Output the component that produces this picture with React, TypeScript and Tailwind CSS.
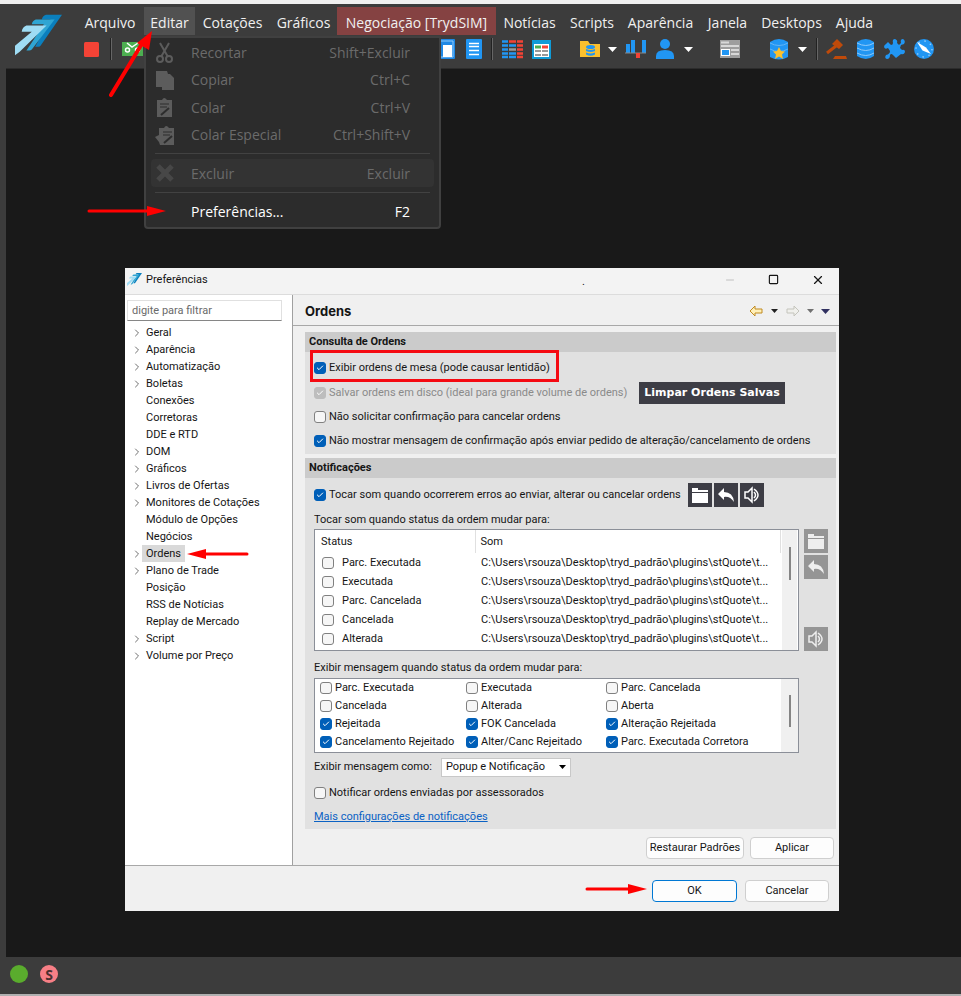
import React, { useState } from 'react';
import { ChevronRight, Check, Minus, Square, X } from 'lucide-react';

interface MenuEntry {
  label: string;
  width: string;
  active?: boolean;
  highlight?: boolean;
}

const menuEntries: MenuEntry[] = [
  { label: 'Arquivo', width: 'w-[66px]' },
  { label: 'Editar', width: 'w-[51px]', active: true },
  { label: 'Cotações', width: 'w-[75px]' },
  { label: 'Gráficos', width: 'w-[67px]' },
  { label: 'Negociação [TrydSIM]', width: 'w-[159px]', highlight: true },
  { label: 'Notícias', width: 'w-[67px]' },
  { label: 'Scripts', width: 'w-[58px]' },
  { label: 'Aparência', width: 'w-[79px]' },
  { label: 'Janela', width: 'w-[55px]' },
  { label: 'Desktops', width: 'w-[73px]' },
  { label: 'Ajuda', width: 'w-[53px]' },
];

const treeItems = [
  { label: 'Geral', children: true },
  { label: 'Aparência', children: true },
  { label: 'Automatização', children: true },
  { label: 'Boletas', children: true },
  { label: 'Conexões' },
  { label: 'Corretoras' },
  { label: 'DDE e RTD' },
  { label: 'DOM', children: true },
  { label: 'Gráficos', children: true },
  { label: 'Livros de Ofertas', children: true },
  { label: 'Monitores de Cotações', children: true },
  { label: 'Módulo de Opções' },
  { label: 'Negócios' },
  { label: 'Ordens', children: true },
  { label: 'Plano de Trade', children: true },
  { label: 'Posição' },
  { label: 'RSS de Notícias' },
  { label: 'Replay de Mercado' },
  { label: 'Script', children: true },
  { label: 'Volume por Preço', children: true },
];

const soundRows = ['Parc. Executada', 'Executada', 'Parc. Cancelada', 'Cancelada', 'Alterada'];
const soundPath = 'C:\\Users\\rsouza\\Desktop\\tryd_padrão\\plugins\\stQuote\\t...';

const messageOptions = [
  { label: 'Parc. Executada', checked: false },
  { label: 'Executada', checked: false },
  { label: 'Parc. Cancelada', checked: false },
  { label: 'Cancelada', checked: false },
  { label: 'Alterada', checked: false },
  { label: 'Aberta', checked: false },
  { label: 'Rejeitada', checked: true },
  { label: 'FOK Cancelada', checked: true },
  { label: 'Alteração Rejeitada', checked: true },
  { label: 'Cancelamento Rejeitado', checked: true },
  { label: 'Alter/Canc Rejeitado', checked: true },
  { label: 'Parc. Executada Corretora', checked: true },
];

const Logo: React.FC<{ className: string }> = ({ className }) => (
  <svg viewBox="0 0 140 120" className={className} aria-hidden="true">
    <path d="M92 0H140L76 92Q74 95 70 95H60L106 14H80Q82 3 92 0Z" fill="#0b7fbd" />
    <path d="M62 14H118L50 103Q47 106 42 106H34L86 28H50Q52 17 62 14Z" fill="#2fa5d3" />
    <path d="M34 32H94L14 110L0 120V92L50 50H20Q22 36 34 32Z" fill="#9fdcf4" />
  </svg>
);

interface CheckboxProps {
  label: string;
  defaultChecked?: boolean;
  disabled?: boolean;
  className?: string;
  gap?: string;
}

const Checkbox: React.FC<CheckboxProps> = ({ label, defaultChecked, disabled, className = '', gap = 'gap-[3px]' }) => (
  <label className={`flex items-center whitespace-nowrap ${gap} ${disabled ? 'text-[#8a8a8a]' : ''} ${className}`}>
    <span className="relative flex shrink-0">
      <input
        type="checkbox"
        defaultChecked={defaultChecked}
        disabled={disabled}
        className="peer h-3 w-3 appearance-none rounded-[3px] border border-[#808080] bg-[#f6f6f6] checked:border-[#005fb8] checked:bg-[#005fb8] disabled:border-[#bdbdbd] disabled:bg-[#bdbdbd]"
      />
      <Check className="pointer-events-none absolute left-0.5 top-0.5 hidden h-2 w-2 text-white peer-checked:block" strokeWidth={3} />
    </span>
    {label}
  </label>
);

const Arrow: React.FC<{ length: number; className?: string }> = ({ length, className = '' }) => (
  <svg width={length} height="12" viewBox={`0 0 ${length} 12`} className={`pointer-events-none shrink-0 ${className}`} aria-hidden="true">
    <path d={`M2 6H${length - 16}`} stroke="#ff0000" strokeWidth="3" strokeLinecap="round" />
    <path d={`M${length - 19} 1L${length} 6L${length - 19} 11Z`} fill="#ff0000" />
  </svg>
);

const Caret: React.FC<{ size?: string; className?: string }> = ({ size = 'h-[5px] w-[9px]', className = 'text-white' }) => (
  <svg viewBox="0 0 10 6" preserveAspectRatio="none" className={`shrink-0 ${size} ${className}`} aria-hidden="true">
    <path d="M0 0H10L5 6Z" fill="currentColor" />
  </svg>
);

const ToolButton: React.FC<{ name: string; className?: string; children: React.ReactNode }> = ({ name, className = '', children }) => (
  <button aria-label={name} className={`flex h-[22px] w-[22px] shrink-0 items-center justify-center ${className}`}>
    <svg viewBox="0 0 22 22" className="h-[22px] w-[22px]" fill="none">
      {children}
    </svg>
  </button>
);

const Divider: React.FC<{ className?: string }> = ({ className = '' }) => (
  <span className={`h-[22px] w-[2px] shrink-0 border-l border-[#222222] bg-[#666666] ${className}`} />
);

const Toolbar = () => (
  <div className="flex h-7 items-center">
    <ToolButton name="Parar">
      <rect x="3" y="4" width="15" height="15" rx="1.5" fill="#f44336" />
    </ToolButton>
    <Divider className="ml-[7px]" />
    <ToolButton name="Boleta" className="ml-[10px]">
      <rect x="0" y="4" width="21" height="14" fill="#4caf50" />
      <circle cx="5.500" cy="12" r="2" stroke="#fff" strokeWidth="1.500" />
      <circle cx="15.500" cy="12" r="2" stroke="#fff" strokeWidth="1.500" />
      <path d="M5 5L10 9L16 5" stroke="#fff" strokeWidth="1.500" />
    </ToolButton>
    <ToolButton name="Painel" className="ml-[291px]">
      <rect x="0" y="1" width="20" height="20" rx="1" fill="#1e88e5" />
      <path d="M2 3H18V19H2Z" stroke="#90caf9" />
      <rect x="8" y="7" width="9" height="12" fill="#fff" />
    </ToolButton>
    <ToolButton name="Lista" className="ml-2">
      <rect x="1" y="1" width="16" height="20" rx="1" fill="#2196f3" />
      <path d="M4 5.500H14M4 8.500H14M4 12.500H14M4 16.500H14" stroke="#fff" strokeWidth="1.500" />
    </ToolButton>
    <Divider className="ml-1" />
    <ToolButton name="Grade" className="ml-[9px]">
      <path d="M0 3.500H6M0 7.500H6M0 11.500H6M0 15.500H6M0 19H6M7 7.500H14M7 15.500H14M7 19H14" stroke="#2196f3" strokeWidth="2.500" />
      <path d="M7 3.500H14M15 3.500H21M15 7.500H21M15 11.500H21M15 15.500H21M15 19H21" stroke="#f44336" strokeWidth="2.500" />
      <path d="M7 11.500H14" stroke="#999" strokeWidth="2.500" />
    </ToolButton>
    <ToolButton name="Tabela" className="ml-2">
      <rect x="0" y="2" width="19" height="19" fill="#0f9bd7" />
      <rect x="2" y="6" width="15" height="13" fill="#fff" />
      <path d="M3 9H9" stroke="#4caf50" strokeWidth="3" />
      <path d="M10 9H16" stroke="#f44336" strokeWidth="3" />
      <path d="M3 13H9M10 13H16M3 17H9M10 17H16" stroke="#999" strokeWidth="2" />
    </ToolButton>
    <ToolButton name="Pasta de dados" className="ml-[26px]">
      <path d="M0 3H8L10 6H20V19H0Z" fill="#fbc02d" />
      <ellipse cx="10.500" cy="9" rx="4.500" ry="2" fill="#2196f3" />
      <path d="M6 11Q10.500 13 15 11V13Q10.500 15 6 13ZM6 14.500Q10.500 16.500 15 14.500V16.500Q10.500 19 6 16.500Z" fill="#2196f3" />
    </ToolButton>
    <Caret className="ml-[6px] text-white" />
    <ToolButton name="Gráfico" className="ml-2">
      <path d="M1 6H5V15H1ZM6 2H10V15H6ZM17 2H21V15H17Z" fill="#2196f3" />
      <path d="M0 15H21" stroke="#888" strokeWidth="1" />
      <path d="M11 15H15V20H11Z" fill="#f44336" />
    </ToolButton>
    <ToolButton name="Usuário" className="ml-2">
      <circle cx="10" cy="6" r="5" fill="#2196f3" />
      <path d="M1 21V18Q1 12 10 12Q19 12 19 18V21Z" fill="#2196f3" />
    </ToolButton>
    <Caret className="ml-[7px] text-white" />
    <ToolButton name="Notícias" className="ml-[27px]">
      <rect x="0" y="2" width="20" height="18" fill="#9e9e9e" />
      <path d="M1 4.500H9M1 8H19M11 12H19M11 16H19" stroke="#d8d8d8" strokeWidth="2" />
      <rect x="1" y="11" width="9" height="7" fill="#fff" />
      <rect x="2" y="12" width="7" height="5" fill="#2196f3" />
    </ToolButton>
    <ToolButton name="Desktops" className="ml-[26px]">
      <path d="M2 4Q11 -2 20 4V19Q11 24 2 19Z" fill="#2196f3" />
      <path d="M2 5Q11 10 20 5M2 11Q11 16 20 11" stroke="#64b5f6" />
      <path d="M11 9L13 13L17 13.500L14 16.500L15 21L11 18.500L7 21L8 16.500L5 13.500L9 13Z" fill="#fbc02d" />
    </ToolButton>
    <Caret className="ml-[8px] text-white" />
    <Divider className="ml-[9px]" />
    <ToolButton name="Leilão" className="ml-2">
      <path d="M6 6L11 1L17 7L13 11Z" fill="#bf4a0a" />
      <path d="M10 8L1 15" stroke="#bf4a0a" strokeWidth="3" />
      <path d="M9 18H20L21 21H7Z" fill="#bf4a0a" />
    </ToolButton>
    <ToolButton name="Dados" className="ml-2">
      <path d="M1 4Q10 -2 18 4V18Q10 24 1 18Z" fill="#2196f3" />
      <path d="M1 5Q10 10 18 5M1 10Q10 15 18 10M1 15Q10 20 18 15" stroke="#90caf9" />
    </ToolButton>
    <ToolButton name="Plugins" className="ml-[6px]">
      <path
        d="M4 4L7 7Q9 7 9 5Q8 1 11 1Q14 2 13 5L15 7L17 5Q16 1 19 1Q22 3 20 6L17 7L16 10L18 12Q21 11 21 14Q20 17 17 16L12 20L9 17Q7 15 6 17Q6 21 3 21Q0 20 2 17Q6 16 6 13L4 10Q1 12 0 9Q0 7 2 6Z"
        fill="#2196f3"
      />
    </ToolButton>
    <ToolButton name="Navegar" className="ml-[7px]">
      <circle cx="11" cy="11" r="10" fill="#2196f3" />
      <circle cx="11" cy="11" r="8" stroke="#90caf9" strokeWidth="1.500" strokeDasharray="1.500 4.800" />
      <path d="M4 4L13 9.500L18 16L9.500 12.500Z" fill="#fff" />
    </ToolButton>
  </div>
);

const editIcons: Record<string, React.ReactNode> = {
  Recortar: (
    <path d="M5 1L13 15M14 1L6 15M8 17A3 3 0 1 1 2 17A3 3 0 1 1 8 17M17 17A3 3 0 1 1 11 17A3 3 0 1 1 17 17" stroke="currentColor" strokeWidth="2" />
  ),
  Copiar: <path d="M1 1H12L13 4H15L19 8V20H7V17H1Z" fill="currentColor" />,
  Colar: (
    <>
      <path d="M2 3H7Q9 -1 12 3H17V20H2Z" fill="currentColor" />
      <path d="M5 7H14M5 10H12" stroke="#2d2d2d" />
      <path d="M6 18L14 11" stroke="#2d2d2d" strokeWidth="2" />
    </>
  ),
  'Colar Especial': (
    <>
      <path d="M4 3H9Q11 -1 14 3H19V20H5L4 17L0 12L4 10Z" fill="currentColor" />
      <path d="M8 7H17M8 10H15" stroke="#2d2d2d" />
      <path d="M9 18L17 11" stroke="#2d2d2d" strokeWidth="2" />
    </>
  ),
  Excluir: <path d="M3 3L17 17M17 3L3 17" stroke="#474747" strokeWidth="5" />,
};

const EditRow: React.FC<{ label: string; shortcut: string; className?: string }> = ({ label, shortcut, className = 'h-7 text-[#6b6b6b]' }) => (
  <button role="menuitem" className={`flex w-full items-center pl-1 pr-6 text-left ${className}`}>
    <svg viewBox="0 0 20 20" className="mr-4 h-5 w-5 overflow-visible text-[#5c5c5c]" fill="none" aria-hidden="true">
      {editIcons[label]}
    </svg>
    <span className="flex-1">{label}</span>
    <span>{shortcut}</span>
  </button>
);

const EditMenu = () => (
  <div role="menu" className="absolute left-[144px] top-8 z-20 w-[297px] rounded-b-[4px] border-2 border-[#404040] bg-[#2c2c2c] px-[5px] pb-[2px] text-[14px]">
    <EditRow label="Recortar" shortcut="Shift+Excluir" />
    <EditRow label="Copiar" shortcut="Ctrl+C" className="h-[27px] text-[#6b6b6b]" />
    <EditRow label="Colar" shortcut="Ctrl+V" />
    <EditRow label="Colar Especial" shortcut="Ctrl+Shift+V" className="h-[27px] text-[#6b6b6b]" />
    <hr className="mx-1 my-[5px] border-[#424242]" />
    <EditRow label="Excluir" shortcut="Excluir" className="h-7 rounded-[4px] bg-[#333333] text-[#6b6b6b]" />
    <hr className="mx-1 my-[5px] border-[#424242]" />
    <EditRow label="Preferências..." shortcut="F2" className="h-[27px] text-white" />
    <Arrow length={79} className="absolute -left-[59px] bottom-[10px]" />
  </div>
);

const Header = () => (
  <header className="relative flex h-16 bg-[#3c3c3c] text-[14px] text-[#f0f0f0]">
    <div className="flex w-[77px] shrink-0 justify-center">
      <Logo className="mt-[10px] h-[42px] w-[47px]" />
    </div>
    <div className="pt-[3px]">
      <nav className="flex h-7">
        {menuEntries.map((entry) => (
          <button
            key={entry.label}
            className={`whitespace-nowrap pt-[2px] ${entry.width} ${entry.active ? 'ml-[1px] bg-[#515151]' : ''} ${entry.highlight ? 'bg-[#854242]' : ''}`}
          >
            {entry.label}
          </button>
        ))}
      </nav>
      <div className="pl-1">
        <Toolbar />
      </div>
    </div>
    <EditMenu />
    <svg viewBox="0 0 44 70" className="pointer-events-none absolute left-[109px] top-[23px] z-30 h-[70px] w-11" aria-hidden="true">
      <path d="M2 68L34 15" stroke="#ff0000" strokeWidth="4" strokeLinecap="round" />
      <path d="M43 4L40 23L28 16Z" fill="#ff0000" />
    </svg>
  </header>
);

const Sidebar: React.FC = () => {
  const [selected, setSelected] = useState('Ordens');

  return (
    <aside className="w-[168px] shrink-0 border-r border-[#a0a0a0] bg-white pl-[2px] pr-[10px] pt-[5px]">
      <input
        type="text"
        aria-label="Filtro"
        placeholder="digite para filtrar"
        className="h-[21px] w-full border border-[#e0e0e0] border-b-[#868686] px-1 placeholder:text-[#6a6a6a]"
      />
      <ul className="mt-[3px]">
        {treeItems.map((item) => (
          <li key={item.label} className="flex h-[17px] items-center">
            <span className="flex w-[15px] justify-center pl-1">
              {item.children && <ChevronRight className="h-3 w-3 shrink-0 text-[#707070]" />}
            </span>
            <button
              onClick={() => setSelected(item.label)}
              className={`h-[17px] whitespace-nowrap px-1 leading-[16px] ${selected === item.label ? 'bg-[#d9d9d9]' : ''}`}
            >
              {item.label}
            </button>
            {item.label === 'Ordens' && <Arrow length={62} className="ml-[2px] rotate-180" />}
          </li>
        ))}
      </ul>
    </aside>
  );
};

const SoundButton: React.FC<{ kind: 'folder' | 'undo' | 'speaker'; disabled?: boolean; className?: string }> = ({ kind, disabled, className = '' }) => (
  <button
    aria-label={kind === 'folder' ? 'Abrir' : kind === 'undo' ? 'Restaurar' : 'Ouvir'}
    disabled={disabled}
    className={`flex h-6 w-6 items-center justify-center ${disabled ? 'bg-[#959595] text-[#eeeeee]' : 'bg-[#3d3d45] text-white'} ${className}`}
  >
    <svg viewBox="0 0 18 18" className="h-[18px] w-[18px]" fill="currentColor" aria-hidden="true">
      {kind === 'folder' && <path d="M1 2H7V4H17V6H1ZM1 7H17V17H1Z" />}
      {kind === 'undo' && <path d="M1 8L7 2V6Q16 6 17 16Q13 10 7 11V14Z" />}
      {kind === 'speaker' && (
        <>
          <path d="M2 6H5L9 2V16L5 12H2Z" fill="none" stroke="currentColor" strokeWidth="1.500" />
          <path d="M11 6Q14 9 11 12M11 3Q19 9 11 15" fill="none" stroke="currentColor" strokeWidth="1.500" />
        </>
      )}
    </svg>
  </button>
);

const Section: React.FC<{ title: string; className?: string; children: React.ReactNode }> = ({ title, className = '', children }) => (
  <section className={`bg-[#e1e1e1] ${className}`}>
    <h2 className="flex h-5 items-center bg-[#cbcbcb] pl-1 font-bold">{title}</h2>
    <div className="pl-[9px]">{children}</div>
  </section>
);

const SoundTable = () => (
  <div className="flex h-[122px] w-[485px] border border-[#8b8f98] bg-white">
    <table className="w-[466px] table-fixed border-collapse self-start text-left">
      <thead>
        <tr className="h-[23px]">
          <th className="w-[160px] border-r border-[#e0e0e0] pl-[6px] font-normal">Status</th>
          <th className="border-r border-[#e0e0e0] pl-[5px] font-normal">Som</th>
        </tr>
      </thead>
      <tbody>
        {soundRows.map((row) => (
          <tr key={row} className="h-[19px]">
            <td className="pl-[7px]">
              <Checkbox label={row} gap="gap-2" />
            </td>
            <td className="whitespace-nowrap pl-[6px]">{soundPath}</td>
          </tr>
        ))}
      </tbody>
    </table>
    <div className="ml-[1px] flex w-[15px] justify-center bg-[#f0f0f0] pt-[17px]">
      <span className="h-[33px] w-[2px] bg-[#858585]" />
    </div>
  </div>
);

const PreferencesPage = () => (
  <div className="flex min-w-0 flex-1 flex-col">
    <div className="flex h-[31px] items-center border-b border-[#a8a8a8] pl-3 pr-[9px] pt-[2px]">
      <h1 className="flex-1 font-[Inter] text-[13px] font-bold">Ordens</h1>
      <div className="flex items-center gap-[7px]">
        <button aria-label="Voltar">
          <svg viewBox="0 0 15 12" className="h-3 w-[15px]" fill="#fff0b8" stroke="#c08a20">
            <path d="M1 6L6 1V4H13V8H6V11Z" />
          </svg>
        </button>
        <Caret size="h-1 w-[7px]" className="text-[#202020]" />
        <button aria-label="Avançar">
          <svg viewBox="0 0 15 12" className="h-3 w-[15px]" fill="#f0f0ec" stroke="#c4c4bc">
            <path d="M14 6L9 1V4H2V8H9V11Z" />
          </svg>
        </button>
        <Caret size="h-1 w-[7px]" className="text-[#707070]" />
        <Caret className="text-[#303060]" />
      </div>
    </div>

    <div className="pl-3 pr-[3px] pt-[6px]">
      <Section title="Consulta de Ordens" className="h-[122px]">
        <div className="relative mt-1 flex h-6 items-center">
          <Checkbox label="Exibir ordens de mesa (pode causar lentidão)" defaultChecked />
          <span className="pointer-events-none absolute -left-1 -top-[6px] h-8 w-[249px] border-[3px] border-[#f50a12]" />
        </div>
        <div className="flex h-[25px] items-center">
          <Checkbox label="Salvar ordens em disco (ideal para grande volume de ordens)" defaultChecked disabled className="w-[325px]" />
          <button className="h-[22px] w-[146px] whitespace-nowrap bg-[#3d3d45] font-['DejaVu_Sans'] text-[11px] font-bold text-white">Limpar Ordens Salvas</button>
        </div>
        <Checkbox label="Não solicitar confirmação para cancelar ordens" className="h-6" />
        <Checkbox label="Não mostrar mensagem de confirmação após enviar pedido de alteração/cancelamento de ordens" defaultChecked className="h-6" />
      </Section>

      <Section title="Notificações" className="mt-1 h-[371px]">
        <div className="flex h-[34px] items-center gap-[2px]">
          <Checkbox label="Tocar som quando ocorrerem erros ao enviar, alterar ou cancelar ordens" defaultChecked className="w-[372px]" />
          <SoundButton kind="folder" />
          <SoundButton kind="undo" />
          <SoundButton kind="speaker" />
        </div>
        <p className="h-[17px] leading-[16px]">Tocar som quando status da ordem mudar para:</p>
        <div className="flex gap-[5px]">
          <SoundTable />
          <div className="flex flex-col gap-[2px]">
            <SoundButton kind="folder" disabled />
            <SoundButton kind="undo" disabled />
            <SoundButton kind="speaker" disabled className="mt-auto" />
          </div>
        </div>
        <p className="mt-2 h-[18px] leading-[18px]">Exibir mensagem quando status da ordem mudar para:</p>
        <div className="mt-[1px] flex h-[75px] w-[485px] border border-[#8b8f98] bg-white">
          <div className="grid h-[72px] flex-1 grid-cols-[146px_140px_1fr] pl-[5px]">
            {messageOptions.map((option) => (
              <Checkbox key={option.label} label={option.label} defaultChecked={option.checked} className="h-[18px]" />
            ))}
          </div>
          <div className="flex w-[17px] justify-center bg-[#f0f0f0] pt-4">
            <span className="h-8 w-[2px] bg-[#858585]" />
          </div>
        </div>
        <div className="mt-1 flex h-5 items-center">
          <label htmlFor="message-mode" className="w-[127px] whitespace-nowrap">Exibir mensagem como:</label>
          <div className="relative flex items-center">
            <select id="message-mode" className="h-[19px] w-[130px] appearance-none border border-[#c8c8c8] bg-white pl-1">
              <option>Popup e Notificação</option>
            </select>
            <Caret size="h-1 w-[7px]" className="pointer-events-none absolute right-[5px] text-black" />
          </div>
        </div>
        <Checkbox label="Notificar ordens enviadas por assessorados" className="mt-1 h-6" />
        <a href="#notificacoes" className="mt-1 inline-block text-[#0b62c4] underline">Mais configurações de notificações</a>
      </Section>
    </div>

    <div className="flex justify-end gap-[6px] pb-[6px] pr-[5px] pt-2">
      <button className="h-[22px] w-[98px] whitespace-nowrap rounded-[4px] border border-[#cfcfcf] bg-[#fdfdfd]">Restaurar Padrões</button>
      <button className="h-[22px] w-[84px] rounded-[4px] border border-[#cfcfcf] bg-[#fdfdfd]">Aplicar</button>
    </div>
  </div>
);

const PreferencesDialog = () => (
  <div role="dialog" aria-label="Preferências" className="w-full max-w-[714px] bg-[#f0f0f0] font-[Roboto] text-[11px] leading-[16px] text-[#151515]">
    <div className="relative flex h-[27px] items-center border-b border-[#dcdcdc] bg-[#f3f3f3] pb-[3px] pl-[2px] pr-[14px]">
      <Logo className="mr-1 h-[13px] w-[15px]" />
      <span className="flex-1">Preferências</span>
      <span className="absolute left-[457px] top-[6px]">.</span>
      <div className="flex items-center gap-8">
        <button aria-label="Minimizar"><Minus className="h-3 w-3 text-[#c0c0c0]" strokeWidth={2} /></button>
        <button aria-label="Maximizar"><Square className="h-[11px] w-[11px]" strokeWidth={2.5} /></button>
        <button aria-label="Fechar"><X className="h-[14px] w-[14px]" strokeWidth={2} /></button>
      </div>
    </div>
    <div className="flex">
      <Sidebar />
      <PreferencesPage />
    </div>
    <div className="flex h-[46px] items-center justify-end border-t border-[#a8a8a8] pr-[10px] pt-[5px]">
      <Arrow length={62} className="mb-1 mr-[5px]" />
      <button className="mr-2 h-[22px] w-[85px] rounded-[4px] border border-[#0078d4] bg-[#fdfdfd]">OK</button>
      <button className="h-[22px] w-[84px] rounded-[4px] border border-[#cfcfcf] bg-[#fdfdfd]">Cancelar</button>
    </div>
  </div>
);

const App: React.FC = () => {
  return (
    <div className="flex min-h-screen flex-col border-b-2 border-t-4 border-b-[#b0b0b0] border-t-[#f0f0f0] bg-[#3c3c3c] font-['Open_Sans',sans-serif]">
      <Header />
      <main className="ml-[6px] flex flex-1 items-start justify-center border-t border-[#2c2c2c] bg-[#191919] pr-[3px] pt-[199px]">
        <PreferencesDialog />
      </main>
      <footer className="flex h-[37px] items-center gap-3 pb-[3px] pl-[10px]">
        <span className="h-[18px] w-[18px] rounded-full bg-[#5aac2d]" />
        <span className="flex h-[18px] w-[18px] items-center justify-center rounded-full bg-[#f77f86] text-[14px] font-bold text-[#4a3030]">S</span>
      </footer>
    </div>
  );
};

export default App;
